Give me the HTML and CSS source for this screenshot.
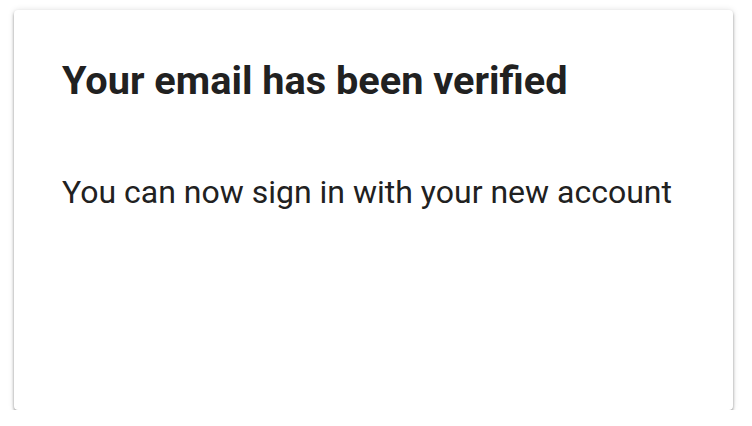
FILE: index.html
```html
<!DOCTYPE html>
<html lang="en">
<head>
<meta charset="utf-8">
<title>Email verified</title>
<link rel="stylesheet" href="styles.css">
</head>
<body>
<main class="card">
  <h1 class="title">Your email has been verified</h1>
  <p class="message">You can now sign in with your new account</p>
</main>
</body>
</html>
```
FILE: styles.css
```css
html, body {
  margin: 0;
  background: #ffffff;
}
body {
  padding: 10px 19px 0 14px;
  font-family: Roboto, "Liberation Sans", sans-serif;
  color: #212121;
}
.card {
  box-sizing: border-box;
  height: 400px;
  background: #ffffff;
  border-radius: 4px;
  box-shadow: 0 2px 3px rgba(0,0,0,0.38), 0 0 6px rgba(0,0,0,0.12);
  padding: 48px 48px;
}
.title {
  margin: 0;
  font-size: 39.7px;
  font-weight: 700;
  line-height: 46px;
}
.message {
  margin: 68px 0 0;
  font-size: 32px;
  font-weight: 400;
  line-height: 40px;
}
```
